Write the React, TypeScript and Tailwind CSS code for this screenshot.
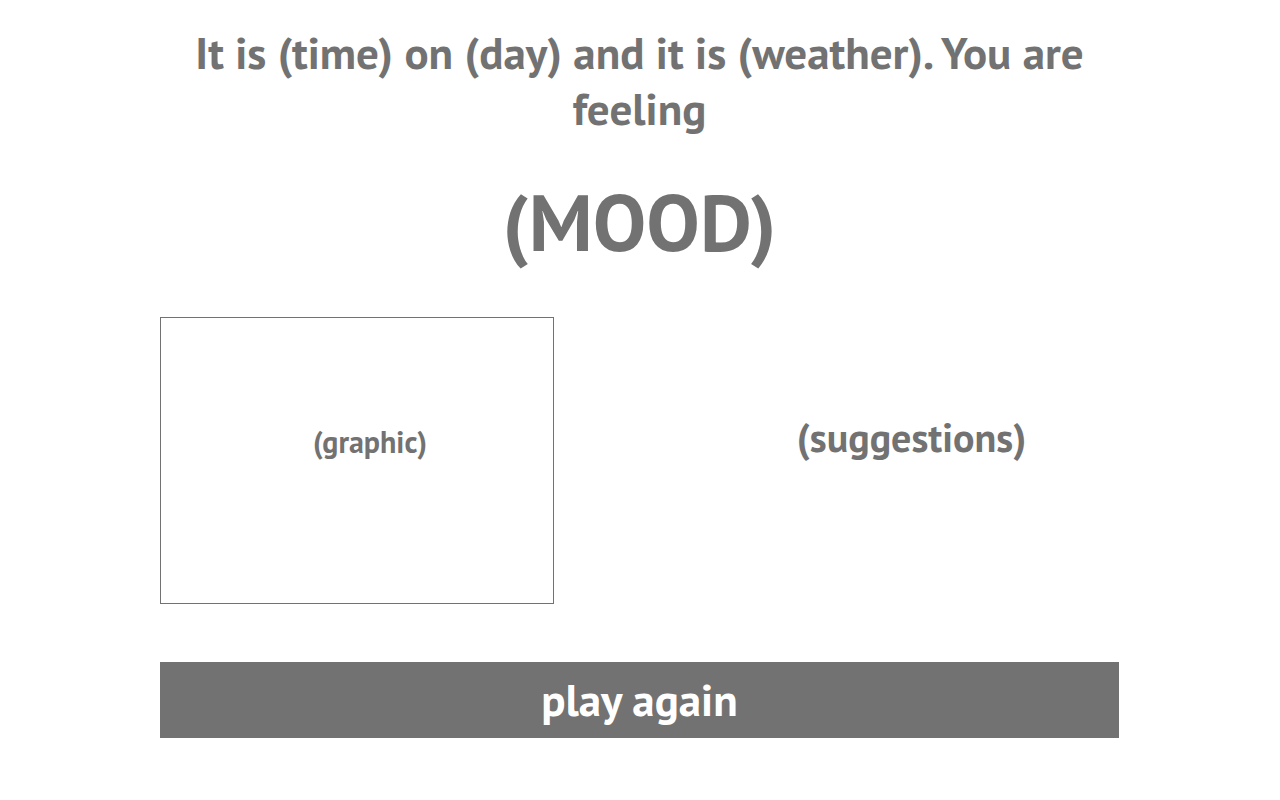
export default function App() {
  return (
    <div
      className="min-h-[800px] w-full bg-white text-[#727272] font-bold"
      style={{ fontFamily: "'PT Sans', Lato, 'Liberation Sans', sans-serif" }}
    >
      <div className="ml-[160px] w-[959px] pt-[24px]">
        <h1 className="text-center text-[45px] leading-[56px]">
          It is (time) on (day) and it is (weather). You are feeling
        </h1>
        <h2 className="mt-[38px] text-center text-[80px] leading-[96px]">(MOOD)</h2>
        <div className="mt-[47px] flex">
          <div className="flex h-[287px] w-[394px] items-center justify-center border border-[#727272] pb-[38px] pl-[26px]">
            <span className="text-[30px]">(graphic)</span>
          </div>
          <div className="flex flex-1 items-center justify-center pb-[48px] pl-[150px]">
            <span className="text-[40px]">(suggestions)</span>
          </div>
        </div>
        <button className="mt-[58px] flex h-[76px] w-full items-center justify-center bg-[#727272] text-[45px] text-white">
          play again
        </button>
      </div>
    </div>
  );
}
